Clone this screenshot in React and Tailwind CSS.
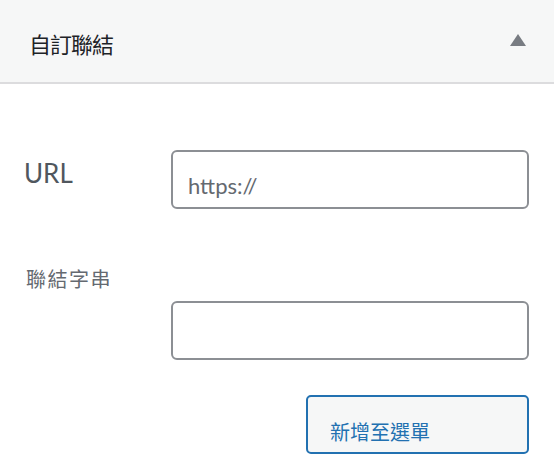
export default function App() {
  return (
    <div className="w-[554px] h-[472px] bg-white font-['Lato','Noto_Sans_CJK_TC',sans-serif] overflow-hidden">
      {/* panel header */}
      <div className="h-[84px] bg-[#f6f7f7] border-b-2 border-[#dcdcde] flex items-center justify-between pl-[29px] pr-[28px] pt-[8px]">
        <h3 className="text-[22px] leading-[30px] text-[#1d2327] tracking-[-1px]">自訂聯結</h3>
        <svg width="16" height="12" viewBox="0 0 16 12" className="mb-[10px]">
          <path d="M8 0 L16 12 L0 12 Z" fill="#787c82" />
        </svg>
      </div>

      <div className="pt-[66px] pr-[25px]">
        <div className="flex items-start">
          <label className="w-[171px] pl-[24px] pt-[8px] text-[26px] leading-[30px] text-[#50575e]">URL</label>
          <input
            type="text"
            defaultValue="https://"
            className="w-[358px] h-[59px] border-2 border-[#8c8f94] rounded-[6px] pl-[15px] pt-[12px] text-[22px] text-[#646970] outline-none"
          />
        </div>

        <div className="mt-[56px]">
          <label className="block pl-[26px] text-[20px] leading-[28px] text-[#646970] tracking-[1.5px]">聯結字串</label>
          <div className="flex mt-[8px] pl-[171px]">
            <input
              type="text"
              className="w-[358px] h-[59px] border-2 border-[#8c8f94] rounded-[6px] px-[15px] text-[22px] outline-none"
            />
          </div>
        </div>

        <div className="flex justify-end mt-[35px]">
          <button className="w-[223px] h-[59px] border-2 border-[#2271b1] rounded-[5px] bg-[#f6f7f7] text-left pl-[22px] pt-[14px] text-[20px] text-[#2271b1]">
            新增至選單
          </button>
        </div>
      </div>
    </div>
  )
}
